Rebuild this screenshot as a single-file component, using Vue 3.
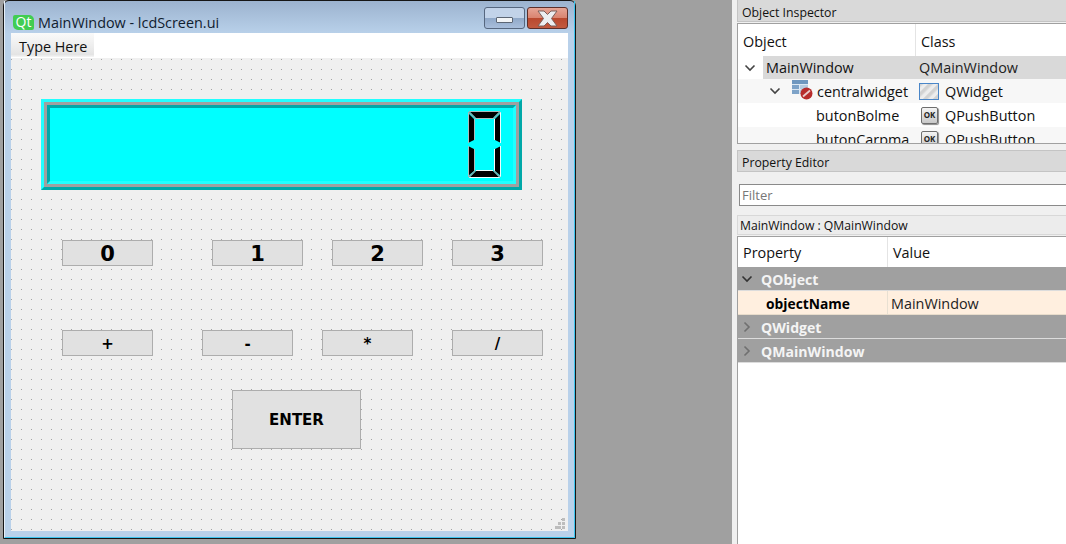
<script setup>
const digits = [
  { label: '0', x: 51, y: 182, w: 91, h: 26, size: 'big' },
  { label: '1', x: 201, y: 182, w: 91, h: 26, size: 'big' },
  { label: '2', x: 321, y: 182, w: 91, h: 26, size: 'big' },
  { label: '3', x: 441, y: 182, w: 91, h: 26, size: 'big' },
  { label: '+', x: 51, y: 272, w: 91, h: 26, size: 'small' },
  { label: '-', x: 191, y: 272, w: 91, h: 26, size: 'small' },
  { label: '*', x: 311, y: 272, w: 91, h: 26, size: 'small' },
  { label: '/', x: 441, y: 272, w: 91, h: 26, size: 'small' },
  { label: 'ENTER', x: 221, y: 332, w: 129, h: 59, size: 'small' }
];

const buttonStyle = (b) => ({
  left: b.x + 'px',
  top: b.y + 'px',
  width: b.w + 'px',
  height: b.h + 'px'
});

// lcd segments, 33x67 box
const segments = [
  '2,1 31,1 25,7 8,7',
  '0,2 6,8 6,29 0,32',
  '33,2 27,8 27,29 33,32',
  '0,35 6,38 6,60 0,65',
  '33,35 27,38 27,60 33,65',
  '8,60 25,60 31,66 2,66'
];

const grip = [
  [7, 0], [3, 4], [7, 4], [0, 8], [3, 8], [7, 8]
];
</script>

<template>
  <div class="page">
    <div class="window">
      <div class="window-inner">
        <div class="titlebar">
          <span class="qt-logo">Qt</span>
          <span class="title">MainWindow - lcdScreen.ui</span>
          <span class="min-btn"><i></i></span>
          <span class="close-btn">
            <svg width="21" height="17" viewBox="0 0 21 17">
              <path d="M1 1h6l3.500 3.500L14 1h6l-5.500 7.500L20 16h-6l-3.500-3.500L7 16H1l5.500-7.500z" fill="#eceef0" stroke="#7a5f5a" stroke-width="1" />
            </svg>
          </span>
        </div>
        <div class="menubar"><span class="menu-item">Type Here</span></div>
        <div class="canvas">
          <div class="lcd-outer">
            <div class="lcd-mid">
              <div class="lcd-inner">
                <svg class="digit" width="33" height="67" viewBox="0 0 33 67">
                  <polygon v-for="s in segments" :key="s" :points="s" fill="#000" />
                  <path d="M1 .5h31M.5 1v31M.5 35v31M7 7.500h19M6.500 8v21M6.500 38v22" stroke="#a9bcbc" stroke-width="1" fill="none" />
                  <path d="M1 66.500h31M32.500 1v31M32.500 35v31M8 59.500h17M26.500 8v21M26.500 38v22" stroke="#f2fbfb" stroke-width="1" fill="none" />
                  <path d="M1 1l6 6M32 1l-6 6M1 66l6-6M32 66l-6-6" stroke="#7fa8a8" stroke-width="1.500" fill="none" />
                </svg>
              </div>
            </div>
          </div>
          <div
            v-for="b in digits"
            :key="b.label"
            class="form-btn"
            :class="b.size"
            :style="buttonStyle(b)"
          >{{ b.label }}</div>
          <svg class="grip" width="10" height="11" viewBox="0 0 10 11">
            <rect v-for="g in grip" :key="g.join()" :x="g[0]" :y="g[1]" width="3" height="3" fill="#bdbdbd" />
          </svg>
        </div>
      </div>
    </div>

    <div class="side">
      <div class="dock-title">Object Inspector</div>
      <div class="tree">
        <div class="head-row">
          <span class="col-obj">Object</span>
          <span class="col-class">Class</span>
        </div>
        <div class="row">
          <span class="col-obj">
            <svg class="chev" style="margin-left: 6px" width="12" height="8" viewBox="0 0 12 8"><path d="M1.500 1.500L6 6l4.500-4.500" fill="none" stroke="#444" stroke-width="1.600" /></svg>
            <span class="selected">MainWindow</span>
          </span>
          <span class="col-class selected-class">QMainWindow</span>
        </div>
        <div class="row alt">
          <span class="col-obj">
            <svg class="chev" style="margin-left: 31px" width="12" height="8" viewBox="0 0 12 8"><path d="M1.500 1.500L6 6l4.500-4.500" fill="none" stroke="#444" stroke-width="1.600" /></svg>
            <svg class="tree-icon" width="22" height="21" viewBox="0 0 22 21">
              <rect x="1" y="1" width="16" height="14" fill="#dbe7f2" />
              <rect x="1" y="1" width="16" height="4" fill="#6f97bf" />
              <rect x="1" y="6" width="7" height="4" fill="#7ea3c8" />
              <rect x="9" y="6" width="8" height="4" fill="#b5cbe0" />
              <rect x="1" y="11" width="7" height="4" fill="#7ea3c8" />
              <rect x="9" y="11" width="8" height="4" fill="#b5cbe0" />
              <circle cx="15.500" cy="14.500" r="6" fill="#b72b2b" />
              <path d="M12 17.500l7-6" stroke="#e8cccc" stroke-width="1.800" />
            </svg>
            <span>centralwidget</span>
          </span>
          <span class="col-class">
            <svg class="class-icon" width="20" height="17" viewBox="0 0 20 17">
              <defs>
                <pattern id="hatch" width="7" height="7" patternUnits="userSpaceOnUse" patternTransform="rotate(45)">
                  <rect width="7" height="7" fill="#ededed" />
                  <rect width="3.500" height="7" fill="#d2d2d2" />
                </pattern>
              </defs>
              <rect x=".5" y=".5" width="19" height="16" fill="url(#hatch)" stroke="#4a86c8" />
            </svg>
            QWidget
          </span>
        </div>
        <div class="row">
          <span class="col-obj"><span class="leaf">butonBolme</span></span>
          <span class="col-class"><span class="ok-icon">OK</span>QPushButton</span>
        </div>
        <div class="row alt">
          <span class="col-obj"><span class="leaf">butonCarpma</span></span>
          <span class="col-class"><span class="ok-icon">OK</span>QPushButton</span>
        </div>
      </div>

      <div class="dock-title second">Property Editor</div>
      <div class="filter">Filter</div>
      <div class="object-label">MainWindow : QMainWindow</div>
      <div class="props">
        <div class="prop-head">
          <span class="prop-key">Property</span>
          <span class="prop-val">Value</span>
        </div>
        <div class="group">
          <svg class="group-chev" width="12" height="8" viewBox="0 0 12 8"><path d="M1.500 1.500L6 6l4.500-4.500" fill="none" stroke="#333" stroke-width="1.600" /></svg>
          QObject
        </div>
        <div class="prop-row">
          <span class="prop-name">objectName</span>
          <span class="prop-value">MainWindow</span>
        </div>
        <div class="group">
          <svg class="group-chev" width="12" height="12" viewBox="0 0 12 12"><path d="M3.500 1.500L8 6l-4.500 4.500" fill="none" stroke="#707070" stroke-width="1.600" /></svg>
          QWidget
        </div>
        <div class="group">
          <svg class="group-chev" width="12" height="12" viewBox="0 0 12 12"><path d="M3.500 1.500L8 6l-4.500 4.500" fill="none" stroke="#707070" stroke-width="1.600" /></svg>
          QMainWindow
        </div>
      </div>
    </div>
  </div>
</template>

<style>
html, body {
  margin: 0;
  overflow: hidden;
}
</style>

<style scoped>
.page {
  width: 1066px;
  height: 544px;
  display: flex;
  align-items: flex-start;
  background: #a0a0a0;
  font-family: "Open Sans", "Noto Sans", sans-serif;
  font-size: 14.4px;
  color: #111;
  overflow: hidden;
}

.window {
  margin-left: 3px;
  width: 573px;
  height: 539px;
  box-sizing: border-box;
  border: 1px solid #161616;
  border-radius: 6px 6px 0 0;
  background: linear-gradient(#9cb3cf, #b9d1ea 33px);
  flex: none;
}
.window-inner {
  height: 100%;
  box-sizing: border-box;
  border-left: 1px solid #e6eff8;
  border-right: 1px solid #3cc4ee;
  border-bottom: 1px solid #3cc4ee;
  padding: 0 6px 6px 6px;
  display: flex;
  flex-direction: column;
}

.titlebar {
  height: 32px;
  flex: none;
  display: flex;
  align-items: flex-start;
}
.qt-logo {
  margin: 14px 4px 0 2px;
  width: 21px;
  height: 15px;
  background: #41cd52;
  border-radius: 2px 5px 2px 5px;
  color: #fff;
  font-size: 14px;
  line-height: 14px;
  text-align: center;
}
.title {
  margin-top: 12px;
  line-height: 20px;
  color: #10202f;
  white-space: nowrap;
  flex: 1;
}
.min-btn,
.close-btn {
  margin-top: 6px;
  width: 41px;
  height: 22px;
  box-sizing: border-box;
  border-radius: 3px;
  display: flex;
  align-items: center;
  justify-content: center;
}
.min-btn {
  border: 1px solid #56677f;
  background: linear-gradient(#c2d3e9 50%, #8fa8c8 50%, #a8bedb);
  margin-right: 2px;
}
.min-btn i {
  display: block;
  width: 17px;
  height: 6px;
  margin-top: 4px;
  background: #f2f4f6;
  border: 1px solid #5c6674;
  border-radius: 1px;
  box-sizing: border-box;
}
.close-btn {
  border: 1px solid #5c2f2a;
  background: linear-gradient(#e6a595, #d9836f 50%, #b9482e 50%, #c25a3f);
}

.menubar {
  height: 25px;
  flex: none;
  background: #fff;
}
.menu-item {
  display: block;
  width: 83px;
  height: 24px;
  box-sizing: border-box;
  padding-left: 8px;
  line-height: 27px;
  background: linear-gradient(#fafafa, #ececec 60%, #e4e4e4 90%, #f6f6f6);
}

.canvas {
  position: relative;
  flex: 1;
  background-color: #f0f0f0;
  background-image: conic-gradient(from 270deg at 1px 1px, #a4a4a4 90deg, transparent 0);
  background-size: 10px 10px;
  background-position: 0 1px;
}

.lcd-outer,
.lcd-mid,
.lcd-inner {
  box-sizing: border-box;
  border-style: solid;
  border-width: 3px;
}
.lcd-outer {
  position: absolute;
  left: 30px;
  top: 41px;
  width: 481px;
  height: 91px;
  border-color: #22ffff #00a8a8 #00a8a8 #22ffff;
}
.lcd-mid {
  height: 100%;
  border-color: #a0a0a0;
}
.lcd-inner {
  height: 100%;
  background: #00ffff;
  border-color: #00a8a8 #22ffff #22ffff #00a8a8;
  display: flex;
  align-items: center;
  justify-content: flex-end;
  padding-right: 12px;
}

.form-btn {
  position: absolute;
  box-sizing: border-box;
  background: #e1e1e1;
  border: 1px solid #adadad;
  padding-top: 1px;
  display: flex;
  align-items: center;
  justify-content: center;
  font-family: "DejaVu Sans", Verdana, sans-serif;
  font-weight: bold;
  color: #000;
}
.form-btn.big {
  font-size: 21px;
}
.form-btn.small {
  font-size: 15px;
}

.grip {
  position: absolute;
  right: 3px;
  bottom: 2px;
}

.side {
  margin-left: 156px;
  width: 334px;
  height: 544px;
  flex: none;
  background: #f0f0f0;
  box-sizing: border-box;
  padding-left: 5px;
  display: flex;
  flex-direction: column;
}
.dock-title {
  height: 22px;
  box-sizing: border-box;
  background: #d9d9d9;
  border: 1px solid #c4c4c4;
  border-right: 0;
  border-top: 0;
  padding-left: 4px;
  font-size: 12.300px;
  line-height: 26px;
  flex: none;
}
.dock-title.second {
  margin-top: 6px;
  border-top: 1px solid #c4c4c4;
  line-height: 23px;
}

.tree {
  margin-top: 1px;
  height: 121px;
  flex: none;
  box-sizing: border-box;
  background: #fff;
  border: 1px solid #a0a0a0;
  border-right: 0;
  overflow: hidden;
}
.head-row {
  height: 32px;
  display: flex;
}
.head-row .col-obj {
  padding: 3px 0 0 5px;
  border-right: 1px solid #e4e4e4;
  box-sizing: border-box;
}
.head-row .col-class {
  padding: 3px 0 0 5px;
  box-sizing: border-box;
}
.col-obj {
  width: 178px;
  flex: none;
  display: flex;
  align-items: center;
  height: 100%;
}
.col-class {
  flex: 1;
  display: flex;
  align-items: center;
  height: 100%;
  white-space: nowrap;
}
.row {
  height: 23px;
  display: flex;
}
.row + .row {
  height: 24px;
}
.row.alt {
  background: #f7f7f7;
}
.selected {
  margin-left: 7px;
  padding-left: 3px;
  flex: 1;
  height: 100%;
  line-height: 23px;
  background: #d9d9d9;
}
.selected-class {
  background: #d9d9d9;
  padding-left: 3px;
  color: #222;
}
.chev {
  flex: none;
}
.tree-icon {
  margin: -3px 4px 0 10px;
  flex: none;
}
.class-icon {
  margin: 0 6px 0 3px;
  flex: none;
}
.leaf {
  margin-left: 78px;
}
.ok-icon {
  width: 17px;
  height: 17px;
  margin: 0 7px 0 5px;
  flex: none;
  box-sizing: border-box;
  border: 1px solid #6e6e6e;
  border-radius: 2px;
  background: linear-gradient(#f4f4f4, #c8c8c8);
  box-shadow: 1px 1px 1px #8a8a8a;
  font-size: 8px;
  font-weight: bold;
  line-height: 14px;
  text-align: center;
  color: #222;
}

.filter {
  margin: 12px 0 0 2px;
  height: 22px;
  flex: none;
  box-sizing: border-box;
  background: #fff;
  border: 1px solid #8a8a8a;
  border-right: 0;
  padding-left: 2px;
  font-size: 13px;
  line-height: 20px;
  color: #777;
}
.object-label {
  margin-top: 9px;
  height: 20px;
  flex: none;
  box-sizing: border-box;
  background: #ececec;
  border: 1px solid #d8d8d8;
  border-right: 0;
  padding-left: 2px;
  font-size: 12.200px;
  line-height: 19px;
}
.props {
  margin-top: 1px;
  flex: 1;
  background: #fff;
  border-left: 1px solid #a0a0a0;
  border-top: 1px solid #a0a0a0;
}
.prop-head {
  height: 30px;
  display: flex;
  line-height: 32px;
}
.prop-key {
  width: 150px;
  padding-left: 5px;
  box-sizing: border-box;
  border-right: 1px solid #e4e4e4;
}
.prop-val {
  padding-left: 5px;
}
.group {
  height: 24px;
  box-sizing: border-box;
  background: #a0a0a0;
  border-bottom: 1px solid #dcdcdc;
  color: #f4f4f4;
  font-weight: bold;
  font-size: 14.100px;
  padding-top: 2px;
  display: flex;
  align-items: center;
  padding-left: 3px;
}
.group-chev {
  margin-right: 8px;
  margin-top: -2px;
  flex: none;
}
.prop-row {
  height: 24px;
  box-sizing: border-box;
  background: #ffefdf;
  display: flex;
  align-items: center;
  border-bottom: 1px solid #e8dccb;
}
.prop-name {
  width: 150px;
  height: 100%;
  box-sizing: border-box;
  padding-left: 28px;
  font-size: 13.800px;
  font-weight: bold;
  line-height: 25px;
  border-right: 1px solid #e8e0d2;
  color: #000;
}
.prop-value {
  padding-left: 3px;
  padding-top: 1px;
  color: #222;
}
</style>
